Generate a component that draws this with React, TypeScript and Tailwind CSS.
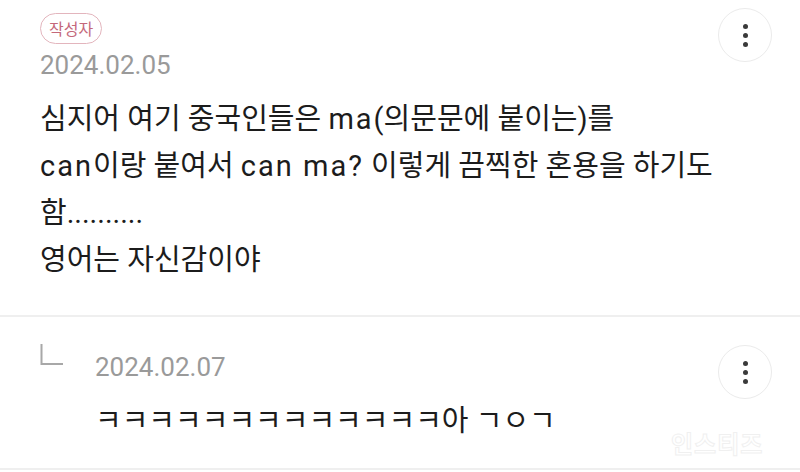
import React from "react";

function Kebab() {
  return (
    <div className="w-[54px] h-[54px] rounded-full border border-[#ebebeb] flex flex-col items-center justify-center gap-[4px] shrink-0">
      <span className="w-[5px] h-[5px] rounded-full bg-[#3a3a3a]" />
      <span className="w-[5px] h-[5px] rounded-full bg-[#3a3a3a]" />
      <span className="w-[5px] h-[5px] rounded-full bg-[#3a3a3a]" />
    </div>
  );
}

function L({ children }: { children: React.ReactNode }) {
  return <span className="tracking-[2px]">{children}</span>;
}

export default function App() {
  return (
    <div className="relative w-[800px] h-[472px] bg-white overflow-hidden font-['Roboto','Noto_Sans_CJK_KR',sans-serif] text-[#1c1c1c]">
      <section className="h-[317px] pl-10 pr-[28px] pt-2 border-b-2 border-[#efefef]">
        <div className="flex justify-between items-start">
          <div className="flex flex-col items-start">
            <span className="mt-[5px] h-[31px] px-[8px] rounded-full border border-[#e3b5bd] text-[#c4687a] text-[16px] leading-[29px] font-['Noto_Sans_CJK_KR',sans-serif]">
              작성자
            </span>
            <span className="mt-[5px] text-[26px] leading-[32px] text-[#9a9a9a]">2024.02.05</span>
          </div>
          <Kebab />
        </div>
        <div className="mt-[15px] text-[29px] leading-[47px] whitespace-nowrap">
          <div>
            심지어 여기 중국인들은 <L>ma</L>(의문문에 붙이는)를
          </div>
          <div>
            <L>can</L>이랑 붙여서 <L>can ma?</L> 이렇게 끔찍한 혼용을 하기도
          </div>
          <div>함..........</div>
          <div>영어는 자신감이야</div>
        </div>
      </section>
      <section className="h-[153px] pl-10 pr-[28px] pt-[28px] border-b-2 border-[#efefef]">
        <div className="flex justify-between items-start">
          <div className="flex items-start">
            <svg width="24" height="24" viewBox="0 0 24 24" className="-mt-[2px] shrink-0">
              <path d="M1.5 1 V21 H23" fill="none" stroke="#a8a8a8" strokeWidth="2" />
            </svg>
            <div className="ml-[31px] flex flex-col">
              <span className="mt-[6px] text-[26px] leading-[32px] text-[#9a9a9a]">2024.02.07</span>
              <span className="mt-[15px] text-[29px] leading-[47px] whitespace-nowrap">ㅋㅋㅋㅋㅋㅋㅋㅋㅋㅋㅋㅋㅋ아 ㄱㅇㄱ</span>
            </div>
          </div>
          <Kebab />
        </div>
      </section>
      <div className="absolute left-[671px] top-[428px] text-[24px] font-bold leading-[30px] text-transparent [-webkit-text-stroke:1px_#f0f0f0] font-['Noto_Sans_CJK_KR',sans-serif] tracking-[1px]">
        인스티즈
      </div>
    </div>
  );
}
